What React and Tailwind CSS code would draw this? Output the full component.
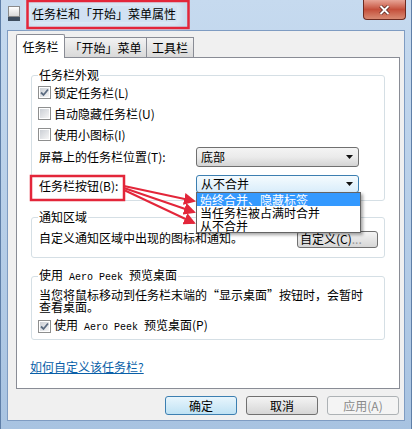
import React from "react";

const CheckBox = ({ checked }) => (
  <span className="w-[13px] h-[13px] shrink-0 border border-[#8e8f8f] bg-white p-px">
    <span className="w-full h-full flex items-center justify-center bg-linear-to-br from-[#cbcfd5] to-[#f6f6f6]">
      {checked && (
        <svg width="9" height="9" viewBox="0 0 9 9">
          <path d="M1 4.5 L3.5 7 L8 1.5" fill="none" stroke="#5b6b80" strokeWidth="1.8" />
        </svg>
      )}
    </span>
  </span>
);

const Arrow = () => (
  <svg width="7" height="4" viewBox="0 0 7 4" className="shrink-0">
    <path d="M0 0 H7 L3.5 4 Z" fill="#111" />
  </svg>
);

const Combo = ({ value, open, children }) => (
  <div className="relative">
    <div
      className={`w-[163px] flex items-center pl-[4px] pr-[5px] rounded-[3px] border ${
        open
          ? "h-[18px] border-[#3c7fb1] bg-linear-to-b from-[#f5fbfe] to-[#d9edfb]"
          : "h-[20px] border-[#707070] bg-linear-to-b from-[#f4f4f4] via-[#ebebeb] to-[#d4d4d4]"
      }`}
    >
      <span className="flex-1 leading-[14px]">{value}</span>
      <Arrow />
    </div>
    {children}
  </div>
);

const Button = ({ children, variant }) => {
  const styles = {
    primary: "border-[#3c7fb1] bg-linear-to-b from-[#e8f5fc] to-[#bfe2f4] text-black",
    normal: "border-[#707070] bg-linear-to-b from-[#f4f4f4] to-[#d6d6d6] text-black",
    disabled: "border-[#adb2b5] bg-[#f4f4f4] text-[#8a8a8a]",
  };
  return (
    <button
      className={`w-[72px] h-[19px] rounded-[3px] border text-[12px] leading-[14px] ${styles[variant]}`}
    >
      {children}
    </button>
  );
};

export default function App() {
  return (
    <div className="relative w-[412px] h-[429px] overflow-hidden bg-linear-to-b from-[#c6daef] to-[#a8c3e1] border-x border-[#5f7fa8] text-[12px] text-black font-['Noto_Sans_CJK_SC',sans-serif]">
      {/* title bar */}
      <div className="h-[30px] flex items-start">
        <div className="ml-[7px] mt-[6px] w-[12px] h-[16px] flex flex-col">
          <span className="h-[11px] bg-linear-to-b from-white to-[#d9d9d9] border border-[#8a8a8a]" />
          <span className="h-[4px] bg-[#3d4c5e]" />
        </div>
        <div className="ml-[11px] mt-[6px] px-[1px] leading-[16px] bg-[#dbe8f5]/60 shadow-[0_0_8px_4px_rgba(235,243,251,0.7)]">
          任务栏和「开始」菜单属性
        </div>
        <div className="flex-1" />
        <div className="mr-[5px] w-[43px] h-[20px] rounded-b-[4px] border border-t-0 border-[#6d2b21] bg-linear-to-b from-[#e7a496] via-[#c44f3b] to-[#d88a73] flex items-center justify-center">
          <svg width="11" height="10" viewBox="0 0 11 10">
            <path d="M1.5 1 L9.5 9 M9.5 1 L1.5 9" stroke="#4a1c15" strokeWidth="3.4" />
            <path d="M1.5 1 L9.5 9 M9.5 1 L1.5 9" stroke="#fff" strokeWidth="2" />
          </svg>
        </div>
      </div>

      {/* client area */}
      <div className="mx-[6px] h-[391px] bg-[#f0f0f0] border border-[#7f9cc2] pt-[3px]">
        {/* tabs */}
        <div className="ml-[8px] h-[24px] flex items-end">
          <div className="relative z-10 w-[49px] h-[24px] bg-white border border-b-0 border-[#898c95] rounded-t-[2px] flex items-center justify-center leading-[14px]">
            任务栏
          </div>
          <div className="mb-px w-[82px] h-[20px] border border-b-0 border-l-0 border-[#898c95] bg-linear-to-b from-[#f3f3f3] to-[#d9d9d9] flex items-center justify-center leading-[14px]">
            「开始」菜单
          </div>
          <div className="mb-px w-[47px] h-[20px] border border-b-0 border-l-0 border-[#898c95] bg-linear-to-b from-[#f3f3f3] to-[#d9d9d9] flex items-center justify-center leading-[14px]">
            工具栏
          </div>
        </div>

        {/* panel */}
        <div className="relative z-0 -mt-px ml-[8px] w-[384px] h-[332px] bg-white border border-[#898c95] pt-[10px] pl-[14px]">
          <fieldset className="w-[354px] border border-[#d5dfe5] rounded-[3px] pl-[7px] pb-[7px]">
            <legend className="leading-[14px] px-px -ml-px">任务栏外观</legend>
            <div className="h-[21px] flex items-center gap-[3px] -ml-px">
              <CheckBox checked />
              <span className="leading-[14px]">锁定任务栏(L)</span>
            </div>
            <div className="h-[21px] flex items-center gap-[3px] -ml-px">
              <CheckBox />
              <span className="leading-[14px]">自动隐藏任务栏(U)</span>
            </div>
            <div className="h-[21px] flex items-center gap-[3px] -ml-px">
              <CheckBox />
              <span className="leading-[14px]">使用小图标(I)</span>
            </div>
            <div className="mt-[2px] h-[20px] flex items-center">
              <span className="w-[157px] leading-[14px]">屏幕上的任务栏位置(T):</span>
              <Combo value="底部" />
            </div>
            <div className="mt-[8px] h-[18px] flex items-center">
              <span className="w-[157px] leading-[14px] mt-[3px]">任务栏按钮(B):</span>
              <Combo value="从不合并" open>
                <div className="absolute z-20 left-0 top-[17px] w-[165px] bg-white border border-[#646464] shadow-[2px_2px_3px_rgba(0,0,0,0.35)] leading-[13px]">
                  <div className="h-[13px] pl-[3px] bg-[#3399ff] text-white">始终合并、隐藏标签</div>
                  <div className="h-[13px] pl-[3px]">当任务栏被占满时合并</div>
                  <div className="h-[13px] pl-[3px]">从不合并</div>
                </div>
              </Combo>
            </div>
          </fieldset>

          <fieldset className="mt-[9px] w-[354px] border border-[#d5dfe5] rounded-[3px] pl-[7px] pb-[8px]">
            <legend className="leading-[14px] px-px -ml-px">通知区域</legend>
            <div className="mt-[5px] h-[20px] flex items-center">
              <span className="flex-1 leading-[14px] -mt-[3px]">自定义通知区域中出现的图标和通知。</span>
              <button className="mr-[6px] w-[81px] h-[17px] rounded-[3px] border border-[#707070] bg-linear-to-b from-[#f4f4f4] to-[#d6d6d6] text-[12px] leading-[14px] pl-[2px] text-left">
                自定义(C)<span className="text-[#9a9a9a]">...</span>
              </button>
            </div>
          </fieldset>

          <fieldset className="mt-[10px] w-[354px] border border-[#d5dfe5] rounded-[3px] pl-[7px] pb-[3px]">
            <legend className="leading-[14px] px-px -ml-px">
              使用<span className="font-['Liberation_Mono',monospace] text-[10px]"> Aero Peek </span>预览桌面
            </legend>
            <p className="mt-[4px] leading-[12px]">
              当您将鼠标移动到任务栏末端的“显示桌面”按钮时，会暂时
              <br />
              查看桌面。
            </p>
            <div className="mt-[3px] h-[20px] flex items-center gap-[3px] -ml-px">
              <CheckBox checked />
              <span className="leading-[14px]">
                使用<span className="font-['Liberation_Mono',monospace] text-[10px]"> Aero Peek </span>预览桌面(P)
              </span>
            </div>
          </fieldset>

          <div className="mt-[20px] -ml-px leading-[14px] text-[#0a5fa8] underline">如何自定义该任务栏?</div>
        </div>

        {/* dialog buttons */}
        <div className="mt-[7px] pr-[5px] flex justify-end gap-[9px]">
          <Button variant="primary">确定</Button>
          <Button variant="normal">取消</Button>
          <Button variant="disabled">应用(A)</Button>
        </div>
      </div>

      {/* annotations */}
      <svg className="absolute inset-0 z-30 pointer-events-none" width="412" height="429">
        <defs>
          <marker id="ah" markerWidth="6" markerHeight="6" refX="5" refY="3" orient="auto">
            <path d="M0 0 L6 3 L0 6 Z" fill="#e3263a" />
          </marker>
        </defs>
        <rect x="26.5" y="1" width="161" height="27" fill="none" stroke="#e3263a" strokeWidth="2.5" />
        <rect x="30" y="176" width="93" height="24" fill="none" stroke="#e3263a" strokeWidth="2.5" />
        <path d="M123 186 L193 201" stroke="#e3263a" strokeWidth="2" markerEnd="url(#ah)" />
        <path d="M123 188 L193 212" stroke="#e3263a" strokeWidth="2" markerEnd="url(#ah)" />
        <path d="M123 190 L193 223" stroke="#e3263a" strokeWidth="2" markerEnd="url(#ah)" />
      </svg>
    </div>
  );
}
